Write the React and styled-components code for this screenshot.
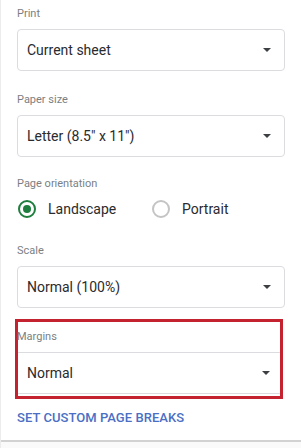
import React from 'react'
import styled, { createGlobalStyle } from 'styled-components'

const Global = createGlobalStyle`
  body {
    margin: 0;
    background: #ffffff;
    font-family: Roboto, "Liberation Sans", sans-serif;
  }
`

const Panel = styled.div`
  width: 301px;
  height: 448px;
  box-sizing: border-box;
  border-left: 1px solid #ececec;
  padding: 7px 0 0 16px;
  display: flex;
  flex-direction: column;
  overflow: hidden;
`

const Label = styled.div`
  font-size: 11px;
  line-height: 14px;
  color: #7b7f83;
  margin-bottom: ${p => p.$gap ?? 8}px;
`

const Select = styled.div`
  box-sizing: border-box;
  width: ${p => p.$width || 268}px;
  height: 42px;
  border: 1px solid #dadce0;
  border-radius: 4px;
  display: flex;
  align-items: center;
  justify-content: space-between;
  padding: 0 13px 0 9px;
  font-size: 14px;
  color: #2a2b2e;

  ${p => p.$flush && `
    border-left: none;
    border-right: none;
    border-radius: 0;
    padding-left: 9px;
    padding-right: 10px;
  `}
`

const Caret = styled.span`
  width: 0;
  height: 0;
  border-left: 4px solid transparent;
  border-right: 4px solid transparent;
  border-top: 4px solid #3c4043;
`

const Section = styled.div`
  margin-bottom: ${p => p.$gap}px;
`

const RadioRow = styled.div`
  display: flex;
  align-items: center;
  height: 20px;
  padding-left: 1px;
`

const RadioOption = styled.label`
  display: flex;
  align-items: center;
  gap: 12px;
  font-size: 14px;
  color: #2a2b2e;
  width: 134px;
`

const Ring = styled.span`
  box-sizing: border-box;
  width: 18px;
  height: 18px;
  border-radius: 50%;
  border: 2px solid ${p => (p.$on ? '#1e7e3e' : '#c4c4c4')};
  display: flex;
  align-items: center;
  justify-content: center;

  &::after {
    content: '';
    width: 8px;
    height: 8px;
    border-radius: 50%;
    background: ${p => (p.$on ? '#1e7e3e' : 'transparent')};
  }
`

const Highlight = styled.div`
  box-sizing: border-box;
  width: 268px;
  margin-left: -2px;
  border: 3px solid #c5222f;
  padding: 8px 0 2px;
  margin-bottom: 12px;

  ${Label} {
    margin-left: -1px;
  }
`

const LinkButton = styled.div`
  font-size: 13px;
  line-height: 14px;
  font-weight: 500;
  color: #4a6fc4;
  letter-spacing: 0.05px;
`

const Footer = styled.div`
  margin-top: auto;
  margin-left: -16px;
  height: 6px;
  border-top: 2px solid #d2d2d2;
  background: #fafafa;
`

function Dropdown({ value, flush, width }) {
  return (
    <Select $flush={flush} $width={width}>
      <span>{value}</span>
      <Caret />
    </Select>
  )
}

export default function App() {
  return (
    <>
      <Global />
      <Panel>
        <Section $gap={22}>
          <Label>Print</Label>
          <Dropdown value="Current sheet" />
        </Section>
        <Section $gap={20}>
          <Label>Paper size</Label>
          <Dropdown value={'Letter (8.5" x 11")'} />
        </Section>
        <Section $gap={25}>
          <Label $gap={8}>Page orientation</Label>
          <RadioRow>
            <RadioOption>
              <Ring $on />
              Landscape
            </RadioOption>
            <RadioOption>
              <Ring />
              Portrait
            </RadioOption>
          </RadioRow>
        </Section>
        <Section $gap={11}>
          <Label>Scale</Label>
          <Dropdown value="Normal (100%)" />
        </Section>
        <Highlight>
          <Label>Margins</Label>
          <Dropdown value="Normal" flush width={262} />
        </Highlight>
        <LinkButton>SET CUSTOM PAGE BREAKS</LinkButton>
        <Footer />
      </Panel>
    </>
  )
}
